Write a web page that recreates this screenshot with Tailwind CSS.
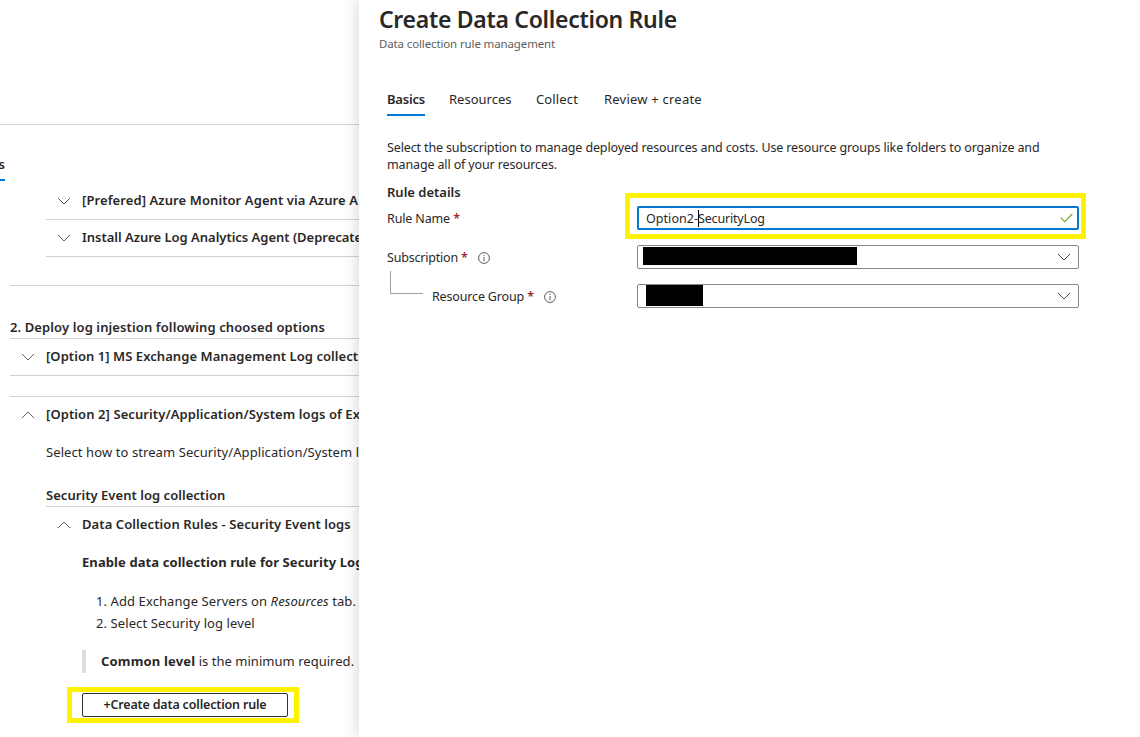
<!DOCTYPE html>
<html lang="en">
<head>
<meta charset="utf-8">
<title>Create Data Collection Rule</title>
<script src="https://cdn.jsdelivr.net/npm/@tailwindcss/browser@4"></script>
</head>
<body class="bg-white">
<svg class="hidden">
  <symbol id="down" viewBox="0 0 14 8"><path d="M1 1l6 6 6-6" fill="none" stroke="currentColor" stroke-width="1"/></symbol>
  <symbol id="up" viewBox="0 0 14 8"><path d="M1 7l6-6 6 6" fill="none" stroke="currentColor" stroke-width="1"/></symbol>
  <symbol id="info" viewBox="0 0 12 12"><circle cx="6" cy="6" r="5.4" fill="none" stroke="currentColor" stroke-width="1"/><path d="M6 5v4.2M6 2.8v1.2" fill="none" stroke="currentColor" stroke-width="1"/></symbol>
</svg>
<div class="flex h-[737px] w-[1140px] overflow-hidden font-['Noto_Sans','Open_Sans',sans-serif] text-[13px] leading-[18px] text-[#292827]">

  <main class="flex h-full w-[359px] shrink-0 flex-col overflow-hidden whitespace-nowrap tracking-[0.09px]">
    <div class="h-[125px] shrink-0 border-b border-[#d2d0ce]"></div>
    <div class="mt-[30px] flex h-[26px] w-[5px] shrink-0 justify-end border-b-2 border-[#0078d4] font-semibold"><span>s</span></div>

    <section class="ml-[46px] mt-[2px] shrink-0 font-semibold">
      <div class="flex h-[37px] items-center border-b border-[#d2d0ce] pb-0.5 pl-[11px]"><svg class="mr-[11px] mt-0.5 h-2 w-3.5 shrink-0 text-[#605e5c]"><use href="#down"/></svg><span>[Prefered] Azure Monitor Agent via Azure A</span></div>
      <div class="flex h-[37px] items-center border-b border-[#d2d0ce] pb-0.5 pl-[11px]"><svg class="mr-[11px] mt-0.5 h-2 w-3.5 shrink-0 text-[#605e5c]"><use href="#down"/></svg><span class="tracking-[-0.02px]">Install Azure Log Analytics Agent (Deprecate</span></div>
    </section>

    <section class="ml-[10px] mt-[28px] shrink-0 border-t border-[#d2d0ce] pt-[32px] font-semibold">
      <h2 class="h-[20px] tracking-[0.11px]">2. Deploy log injestion following choosed options</h2>
      <div class="flex h-[38px] items-center border-y border-[#d2d0ce] pb-0.5 pl-[11px]"><svg class="mr-[11px] mt-0.5 h-2 w-3.5 shrink-0 text-[#605e5c]"><use href="#down"/></svg><span class="tracking-[0.06px]">[Option 1] MS Exchange Management Log collect</span></div>
      <div class="mt-[20px] flex h-[37px] items-center border-t border-[#d2d0ce] pb-0.5 pl-[11px]"><svg class="mr-[11px] mt-0.5 h-2 w-3.5 shrink-0 text-[#605e5c]"><use href="#up"/></svg><span>[Option 2] Security/Application/System logs of Ex</span></div>
    </section>

    <section class="ml-[46px] shrink-0">
      <p class="mt-[10px]">Select how to stream Security/Application/System l</p>
      <h3 class="mt-[25px] h-[21px] border-b border-[#d2d0ce] font-semibold tracking-[0.04px]">Security Event log collection</h3>
      <div class="flex h-[36px] items-center pb-[3px] pl-[11px] font-semibold"><svg class="mr-[11px] mt-0.5 h-2 w-3.5 shrink-0 text-[#605e5c]"><use href="#up"/></svg><span>Data Collection Rules - Security Event logs</span></div>
      <div class="pl-[36px]">
        <p class="mt-[10px] font-bold">Enable data collection rule for Security Log</p>
        <ol class="mt-[19px] pl-[14px] leading-[22px]">
          <li>1. Add Exchange Servers on <i>Resources</i> tab.</li>
          <li>2. Select Security log level</li>
        </ol>
        <blockquote class="mt-[16px] h-[23px] border-l-4 border-[#dddddd] pl-[15px] leading-[22px]"><b class="tracking-[0.17px]">Common level</b><span class="tracking-[0.03px]"> is the minimum required.</span></blockquote>
      </div>
    </section>
    <div class="ml-[67px] mt-[14px] h-[36px] w-[232px] shrink-0 border-[5px] border-[#fff200] pl-[10px] pt-[1px]">
      <button class="flex h-[24px] w-[206px] items-center justify-center rounded-[2px] border border-[#323130] pb-px text-[12.5px] font-semibold tracking-[-0.17px]">+Create data collection rule</button>
    </div>
  </main>

  <aside class="relative h-full w-[781px] shrink-0 bg-white pl-[20px] shadow-[0_0_16px_rgba(0,0,0,0.18)]">
    <h1 class="h-[36px] pt-[3px] text-[23px] font-semibold leading-[32px] tracking-[-0.3px]">Create Data Collection Rule</h1>
    <p class="text-[11.5px] leading-[16px] tracking-[-0.13px] text-[#605e5c]">Data collection rule management</p>

    <div class="pl-[8px]">
      <nav class="mt-[38px] flex h-[26px] leading-[18px]">
        <span class="mr-[24px] w-[38px] border-b-2 border-[#0078d4] font-semibold tracking-[-0.2px]">Basics</span>
        <span class="mr-[25px] w-[62px]">Resources</span>
        <span class="mr-[26px] w-[42px] tracking-[0.13px]">Collect</span>
        <span class="tracking-[0.22px]">Review + create</span>
      </nav>

      <p class="mt-[23px] whitespace-nowrap text-[12.5px] leading-[17px] tracking-[-0.135px]">Select the subscription to manage deployed resources and costs. Use resource groups like folders to organize and<br>manage all of your resources.</p>
      <h2 class="mt-[10px] font-semibold">Rule details</h2>

      <div class="-mt-[8px] flex h-[46px] items-center text-[12.5px]">
        <label class="w-[238px] pt-[5px] tracking-[-0.14px]">Rule Name <span class="font-semibold text-[#a4262c]">*</span></label>
        <div class="h-[46px] w-[461px] border-[5px] border-[#fff200] px-[7px] pt-[8px]">
          <div class="flex h-[24px] w-[442px] items-center rounded-[2px] border-2 border-[#0078d4] pl-[7px] pr-[4px] tracking-[-0.18px]">
            <span class="pt-px tracking-[0.05px]">Option2-</span><span class="h-[17px] w-px bg-black"></span><span class="-ml-px pt-px">SecurityLog</span>
            <svg class="ml-auto h-[10px] w-[13px] shrink-0" viewBox="0 0 13 10"><path d="M.7 4.7l4 4L12.3 1" fill="none" stroke="#6bb02c" stroke-width="1.2"/></svg>
          </div>
        </div>
      </div>

      <div class="mt-[6px] flex h-[24px] items-center text-[12.5px]">
        <label class="flex w-[250px] items-center pt-0.5 tracking-[-0.2px]">Subscription&nbsp;<span class="font-semibold text-[#a4262c]">*</span><svg class="ml-[10px] h-3 w-3 shrink-0 text-[#605e5c]"><use href="#info"/></svg></label>
        <div class="flex h-[24px] w-[442px] items-start rounded-[2px] border border-[#8a8886] pl-[5px] pr-[7px] pt-px">
          <div class="h-[18px] w-[214px] bg-black"></div><svg class="ml-auto mt-[6px] h-2 w-3.5 text-[#484644]"><use href="#down"/></svg>
        </div>
      </div>

      <div class="mt-[2px] flex h-[37px] text-[12.5px]">
        <div class="ml-[3px] h-[23px] w-[33px] border-b border-l border-[#a19f9d]"></div>
        <label class="ml-[9px] mt-[13px] flex h-[24px] w-[205px] items-center pt-0.5 tracking-[-0.16px]">Resource Group&nbsp;<span class="font-semibold text-[#a4262c]">*</span><svg class="ml-[10px] h-3 w-3 shrink-0 text-[#605e5c]"><use href="#info"/></svg></label>
        <div class="mt-[13px] flex h-[24px] w-[442px] items-start rounded-[2px] border border-[#8a8886] pl-[8px] pr-[7px]">
          <div class="h-[21px] w-[57px] bg-black"></div><svg class="ml-auto mt-[7px] h-2 w-3.5 text-[#484644]"><use href="#down"/></svg>
        </div>
      </div>
    </div>
  </aside>
</div>
</body>
</html>
